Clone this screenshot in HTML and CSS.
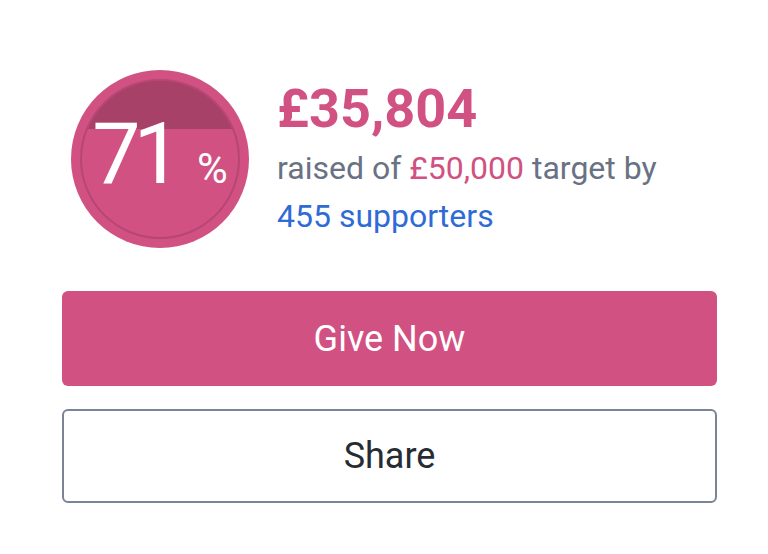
FILE: index.html
```html
<!DOCTYPE html>
<html lang="en">
<head>
    <meta charset="UTF-8">
    <meta name="viewport" content="width=device-width, initial-scale=1.0">
    <title>Fundraising Progress</title>
    <link rel="stylesheet" href="styles.css">
</head>
<body>
    <div class="container">
        <!-- Progress summary -->
        <div class="summary">
            <div class="progress-ring">
                <div class="progress-inner">
                    <span class="percent">71</span><span class="percent-sign">%</span>
                </div>
            </div>
            <div class="totals">
                <div class="amount">£35,804</div>
                <div class="details">raised of <span class="target">£50,000</span> target by</div>
                <div class="details"><a href="#" class="supporters">455 supporters</a></div>
            </div>
        </div>

        <button type="button" class="btn btn-give">Give Now</button>
        <button type="button" class="btn btn-share">Share</button>
    </div>
</body>
</html>
```

FILE: styles.css
```css
body {
    margin: 0;
    background-color: #fff;
    font-family: Roboto, "Liberation Sans", Arial, sans-serif;
}
.container {
    width: 655px;
    padding: 70px 0 0 62px;
}
.summary {
    display: flex;
    align-items: flex-start;
}
.progress-ring {
    width: 178px;
    height: 178px;
    margin-left: 9px;
    border-radius: 50%;
    background-color: #d05182;
    display: flex;
    align-items: center;
    justify-content: center;
    flex-shrink: 0;
}
.progress-inner {
    box-sizing: border-box;
    width: 160px;
    height: 160px;
    border-radius: 50%;
    border: 2px solid #b74675;
    background: linear-gradient(to bottom, #a84168 0, #a84168 31%, #d05182 31%); /* 29% still to raise */
    display: flex;
    align-items: baseline;
    justify-content: center;
    padding-top: 30px;
    color: #fff;
}
.percent {
    font-size: 86px;
    line-height: 1;
    letter-spacing: -7px;
}
.percent-sign {
    font-size: 42px;
    margin-left: 22px;
}
.totals {
    margin: 3px 0 0 28px;
}
.amount {
    font-size: 54px;
    font-weight: 700;
    line-height: 71px;
    color: #d05182;
}
.details {
    font-size: 32px;
    line-height: 48px;
    color: #687284;
}
.target {
    color: #d05182;
}
.supporters {
    color: #2f6bd6;
    text-decoration: none;
}
.btn {
    display: block;
    box-sizing: border-box;
    width: 655px;
    border-radius: 6px;
    font-family: Roboto, "Liberation Sans", Arial, sans-serif;
    font-size: 36px;
    cursor: pointer;
}
.btn-give {
    height: 95px;
    margin-top: 43px;
    border: none;
    background-color: #d05182;
    color: #fff;
}
.btn-share {
    height: 94px;
    margin-top: 23px;
    border: 2px solid #7b8494;
    background-color: #fff;
    color: #272c33;
}
```
